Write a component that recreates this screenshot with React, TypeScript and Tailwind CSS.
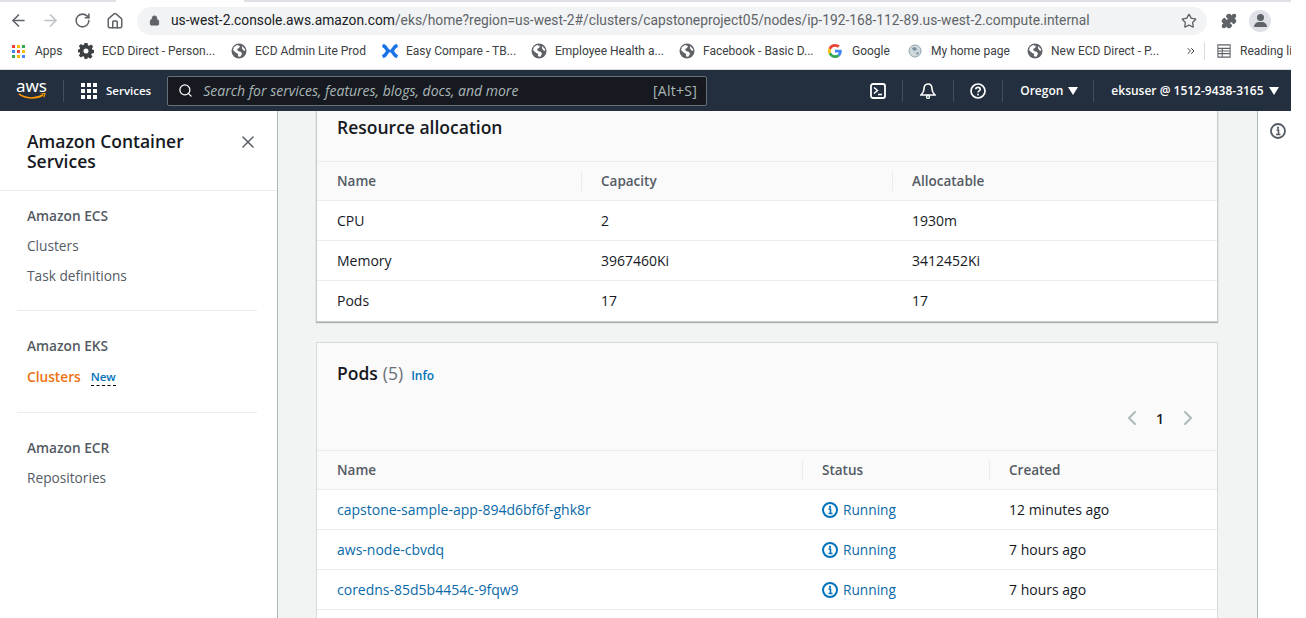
import React from 'react';
import { ArrowLeft, ArrowRight, RotateCw, Home, Lock, Star, Puzzle, ChevronLeft, ChevronRight, X, Search, ChevronsRight } from 'lucide-react';

const Globe = () => (
  <svg viewBox="0 0 16 16" className="w-4 h-4 shrink-0">
    <circle cx="8" cy="8" r="7.5" fill="#5f6368" />
    <path d="M3 4l3-2 3 1-1 2-2 1 1 2 3 1 1 2-2 3-2-1V11L4 9 2 7zM11 3l3 3v2l-2-1-1-2z" fill="#fff" />
  </svg>
);

const Gear = () => (
  <svg viewBox="0 0 16 16" className="w-4 h-4 shrink-0">
    <path d="M6.500 0h3l.4 2.200 1.300.6L13.100 1.500l2.100 2.100-1.300 1.900.6 1.300L16 7v3l-2.200.4-.6 1.300 1.300 1.900-2.100 2.100-1.900-1.300-1.300.6L9.500 16h-3l-.4-2.200-1.300-.6-1.900 1.300L.8 12.400l1.300-1.900-.6-1.300L0 9.500v-3l1.500-.3.600-1.300L.8 3 2.900.9l1.900 1.300 1.300-.6z" fill="#3c4043" />
    <circle cx="8" cy="8" r="2.500" fill="#fff" />
  </svg>
);

const AppsGrid = () => {
  const colors = ['#ea4335', '#fbbc05', '#34a853', '#4285f4', '#ea4335', '#fbbc05', '#34a853', '#fbbc05', '#4285f4'];
  return (
    <div className="grid grid-cols-3 gap-[2px] w-[13px] shrink-0">
      {colors.map((c, i) => (
        <svg key={i} viewBox="0 0 3 3" className="w-[3px] h-[3px]"><rect width="3" height="3" fill={c} /></svg>
      ))}
    </div>
  );
};

const Confluence = () => (
  <svg viewBox="0 0 16 16" className="w-4 h-4 shrink-0">
    <path d="M1 1c2 0 3 1 4 2.500C6.500 6 8 7 8 7s1.500-1 3-3.500C12 2 13 1 15 1l1 3c-2 1-3 2.500-4 4 1 1.500 2 3 4 4l-1 3c-2 0-3-1-4-2.500C9.500 10 8 9 8 9s-1.500 1-3 3.500C4 14 3 15 1 15l-1-3c2-1 3-2.500 4-4C3 6.500 2 5 0 4z" fill="#1a73e8" />
  </svg>
);

const GoogleG = () => (
  <svg viewBox="0 0 16 16" className="w-[14px] h-[14px] mr-[2px] shrink-0">
    <path d="M15.700 8.200c0-.6 0-1-.1-1.500H8v2.900h4.400c-.2 1-.8 1.800-1.600 2.300l2.500 2c1.500-1.400 2.400-3.400 2.400-5.700z" fill="#4285f4" />
    <path d="M8 16c2.200 0 4-.7 5.300-2l-2.500-2c-.7.500-1.600.8-2.800.8-2.100 0-3.900-1.400-4.600-3.400L.8 11.500C2.100 14.200 4.800 16 8 16z" fill="#34a853" />
    <path d="M3.400 9.400c-.3-.9-.3-1.900 0-2.800L.8 4.500c-1.100 2.200-1.100 4.800 0 7z" fill="#fbbc05" />
    <path d="M8 3.200c1.200 0 2.300.4 3.100 1.200l2.300-2.300C12 .8 10.100 0 8 0 4.800 0 2.100 1.800.8 4.500l2.600 2.100C4.100 4.600 5.900 3.200 8 3.200z" fill="#ea4335" />
  </svg>
);

const SmallGlobe = () => (
  <svg viewBox="0 0 16 16" className="w-4 h-4 shrink-0">
    <circle cx="8" cy="8" r="6" fill="#cfd8dc" stroke="#90a4ae" strokeWidth="1" />
    <path d="M5 5l3-1 2 2-2 2-2-1zM9 10l2-1 1 1-2 2z" fill="#78909c" />
  </svg>
);

const Caret = () => (
  <svg viewBox="0 0 10 8" className="w-[10px] h-[8px] ml-[5px] shrink-0">
    <path d="M0 0h10L5 8z" fill="#fff" />
  </svg>
);

const bookmarks = [
  { label: 'ECD Direct - Person...', icon: <Gear />, width: 'w-[153px]' },
  { label: 'ECD Admin Lite Prod', icon: <Globe />, width: 'w-[151px]' },
  { label: 'Easy Compare - TB...', icon: <Confluence />, width: 'w-[149px]' },
  { label: 'Employee Health a...', icon: <Globe />, width: 'w-[148px]' },
  { label: 'Facebook - Basic D...', icon: <Globe />, width: 'w-[149px]' },
  { label: 'Google', icon: <GoogleG />, width: 'w-[79px]' },
  { label: 'My home page', icon: <SmallGlobe />, width: 'w-[120px]' },
  { label: 'New ECD Direct - P...', icon: <Globe />, width: 'w-[158px]' },
];

const RunningIcon = () => (
  <svg viewBox="0 0 16 16" className="w-4 h-4 shrink-0">
    <circle cx="8" cy="8" r="7" fill="none" stroke="#0073bb" strokeWidth="2" />
    <path d="M6.500 7h2v4M6.500 11.500h4" fill="none" stroke="#0073bb" strokeWidth="1.600" />
    <rect x="7" y="3.800" width="2" height="2" fill="#0073bb" />
  </svg>
);

const ColumnHead = ({ children, divider }: { children: React.ReactNode; divider?: boolean }) => (
  <div className="flex items-center h-[38px] pl-5 font-semibold text-[13.5px] text-[#545b64]">
    {divider && <span className="w-px h-[20px] bg-[#eaeded] -ml-5 mr-[19px]" />}
    {children}
  </div>
);

const resources = [
  ['CPU', '2', '1930m'],
  ['Memory', '3967460Ki', '3412452Ki'],
  ['Pods', '17', '17'],
];

const pods = [
  ['capstone-sample-app-894d6bf6f-ghk8r', '12 minutes ago'],
  ['aws-node-cbvdq', '7 hours ago'],
  ['coredns-85d5b4454c-9fqw9', '7 hours ago'],
];

export default function App() {
  return (
    <div className="w-[1306px] h-[618px] overflow-hidden bg-white font-['Open_Sans',sans-serif]">
      <div className="w-[1291px] h-[618px] flex flex-col overflow-hidden">
        {/* Browser tab strip remnant */}
        <div className="flex h-[2px] shrink-0">
          <div className="w-[116px] bg-[#dee1e6]" />
          <div className="w-[128px] bg-white" />
          <div className="flex-1 bg-[#dee1e6]" />
        </div>

        {/* Browser toolbar */}
        <div className="flex items-center h-[33px] shrink-0 pt-[4px] font-['Roboto',sans-serif]">
          <ArrowLeft className="w-[19px] h-[19px] ml-[9px] text-[#5f6368]" strokeWidth={2} />
          <ArrowRight className="w-[19px] h-[19px] ml-[13px] text-[#bdc1c6]" strokeWidth={2} />
          <RotateCw className="w-[17px] h-[17px] ml-[14px] text-[#5f6368]" strokeWidth={2.200} />
          <Home className="w-[18px] h-[18px] ml-[15px] text-[#5f6368]" strokeWidth={2} />
          <div className="flex items-center w-[1070px] h-[28px] ml-[13px] rounded-full bg-[#f1f3f4] pl-[12px] pr-[10px]">
            <Lock className="w-[11px] h-[11px] text-[#5f6368] fill-[#5f6368]" />
            <span className="ml-[11px] text-[13.8px] text-[#5f6368] whitespace-nowrap">
              <span className="text-[#202124]">us-west-2.console.aws.amazon.com</span>/eks/home?region=us-west-2#/clusters/capstoneproject05/nodes/ip-192-168-112-89.us-west-2.compute.internal
            </span>
            <Star className="w-[16px] h-[16px] ml-auto text-[#5f6368]" />
          </div>
          <Puzzle className="w-[16px] h-[16px] ml-[14px] text-[#5f6368] fill-[#5f6368]" />
          <div className="ml-[12px] w-[22px] h-[22px] rounded-full bg-[#dee1e6] flex flex-col items-center justify-center">
            <span className="w-[7px] h-[7px] rounded-full bg-[#5f6368]" />
            <span className="w-[13px] h-[5px] mt-px rounded-t-full bg-[#5f6368]" />
          </div>
        </div>

        {/* Bookmarks bar */}
        <div className="flex items-center h-[35px] shrink-0 pb-[2px] border-b border-[#dadce0] text-[12px] text-[#3c4043] font-['Roboto',sans-serif] whitespace-nowrap overflow-hidden">
          <div className="flex items-center w-[78px] shrink-0 pl-[12px] gap-[10px]">
            <AppsGrid />
            <span>Apps</span>
          </div>
          {bookmarks.map(b => (
            <div key={b.label} className={`flex items-center gap-2 shrink-0 ${b.width}`}>
              {b.icon}
              <span>{b.label}</span>
            </div>
          ))}
          <ChevronsRight className="w-[12px] h-[12px] shrink-0 text-[#3c4043]" />
          <span className="w-px h-[18px] shrink-0 bg-[#dadce0] ml-[7px]" />
          <svg viewBox="0 0 16 16" className="w-[14px] h-[14px] ml-[12px] shrink-0">
            <path d="M1 1h14v14H1zM1 5h14M1 8h14M1 11h14M6 5v10" fill="none" stroke="#5f6368" strokeWidth="1.200" />
          </svg>
          <span className="ml-[9px]">Reading list</span>
        </div>

        {/* AWS console nav */}
        <div className="flex items-center h-[41px] shrink-0 bg-[#232f3e] text-white text-[12px] font-semibold whitespace-nowrap">
          <div className="flex flex-col items-center w-[33px] ml-[15px] leading-none">
            <span className="text-[17px] font-normal leading-[14px] -mt-[2px] font-['Noto_Sans',sans-serif]">aws</span>
            <svg viewBox="0 0 32 8" className="w-[32px] h-[7px]">
              <path d="M1 1c8 6 20 6 28 1" fill="none" stroke="#ff9900" strokeWidth="1.800" />
              <path d="M26 0l5 .5-1.500 4.500" fill="none" stroke="#ff9900" strokeWidth="1.300" />
            </svg>
          </div>
          <span className="w-px h-[22px] bg-[#414d5c] ml-[15px]" />
          <div className="grid grid-cols-3 gap-[2px] w-[16px] ml-[17px]">
            {[...Array(9)].map((_, i) => (
              <span key={i} className="w-[4px] h-[4px] bg-white" />
            ))}
          </div>
          <span className="ml-[9px] text-[11.5px]">Services</span>
          <div className="flex items-center w-[540px] h-[30px] ml-[16px] pl-[10px] pr-[9px] rounded-[2px] bg-[#16191f] border border-[#687078] font-normal text-[14px] text-[#aab7b8]">
            <Search className="w-[15px] h-[15px] text-white" strokeWidth={2} />
            <span className="ml-[10px] italic">Search for services, features, blogs, docs, and more</span>
            <span className="ml-auto tracking-[0.3px]">[Alt+S]</span>
          </div>
          <svg viewBox="0 0 16 16" className="w-4 h-4 ml-[163px] shrink-0">
            <rect x="1" y="1" width="14" height="14" rx="2" fill="none" stroke="#fff" strokeWidth="1.800" />
            <path d="M4 4.500L7.500 7.500 4 10.500M8 11.500h4" fill="none" stroke="#fff" strokeWidth="1.500" />
          </svg>
          <span className="w-px h-[22px] bg-[#414d5c] ml-[16px]" />
          <svg viewBox="0 0 16 16" className="w-4 h-4 ml-[17px] shrink-0">
            <path d="M8 1c3 0 4 2.500 4 5 0 3 2 5 3 6H1c1-1 3-3 3-6 0-2.500 1-5 4-5z" fill="none" stroke="#fff" strokeWidth="1.600" />
            <circle cx="8" cy="14" r="1.500" fill="none" stroke="#fff" strokeWidth="1.300" />
          </svg>
          <span className="w-px h-[22px] bg-[#414d5c] ml-[17px]" />
          <svg viewBox="0 0 16 16" className="w-4 h-4 ml-[16px] shrink-0">
            <circle cx="8" cy="8" r="7" fill="none" stroke="#fff" strokeWidth="1.700" />
            <path d="M5.800 6.200C5.800 3.800 10.200 3.800 10.200 6.200 10.200 7.800 8 7.800 8 9.500" fill="none" stroke="#fff" strokeWidth="1.600" />
            <rect x="7.200" y="10.700" width="1.600" height="1.700" fill="#fff" />
          </svg>
          <span className="w-px h-[22px] bg-[#414d5c] ml-[16px]" />
          <span className="ml-[17px]">Oregon</span>
          <Caret />
          <span className="w-px h-[22px] bg-[#414d5c] ml-[15px]" />
          <span className="ml-[17px]">eksuser @ 1512-9438-3165</span>
          <Caret />
        </div>

        <div className="flex flex-1 min-h-0">
          {/* Sidebar */}
          <aside className="w-[278px] shrink-0 border-r border-[#aab7b8] text-[13.7px] text-[#545b64]">
            <div className="flex justify-between h-[80px] pl-[27px] pr-[19px] pt-[20px] border-b border-[#eaeded]">
              <h2 className="w-[190px] font-semibold text-[17.5px] leading-[20px] text-[#16191f]">Amazon Container Services</h2>
              <X className="w-[20px] h-[20px] mt-px text-[#545b64]" strokeWidth={1.800} />
            </div>
            <div className="ml-[17px] mr-[20px] pl-[10px] pt-[15px] h-[120px] border-b border-[#eaeded]">
              <h3 className="font-semibold leading-[20px]">Amazon ECS</h3>
              <p className="mt-[10px] leading-[20px]">Clusters</p>
              <p className="mt-[10px] leading-[20px]">Task definitions</p>
            </div>
            <div className="ml-[17px] mr-[20px] pl-[10px] pt-[25px] h-[102px] border-b border-[#eaeded]">
              <h3 className="font-semibold leading-[20px]">Amazon EKS</h3>
              <div className="flex items-center mt-[11px] leading-[20px]">
                <span className="font-semibold text-[#ec7211]">Clusters</span>
                <span className="ml-[10px] text-[11.5px] leading-[16px] font-semibold text-[#0073bb] border-b border-dashed border-black">New</span>
              </div>
            </div>
            <div className="ml-[17px] mr-[20px] pl-[10px] pt-[25px]">
              <h3 className="font-semibold leading-[20px]">Amazon ECR</h3>
              <p className="mt-[10px] leading-[20px]">Repositories</p>
            </div>
          </aside>

          {/* Main content */}
          <main className="flex-1 min-w-0 bg-[#f2f3f3] pl-[38px] pr-[39px] overflow-hidden text-[14px] text-[#16191f]">
            <section className="bg-white border-x border-b border-[#c6cccc] shadow-[0_1px_1px_0_rgba(0,28,36,0.3)]">
              <div className="h-[51px] pl-5 pt-[4px] bg-[#fafafa] border-b border-[#eaeded]">
                <h2 className="font-semibold text-[17.5px] leading-[24px]">Resource allocation</h2>
              </div>
              <div className="grid grid-cols-[264px_311px_1fr] bg-[#fafafa] border-b border-[#eaeded]">
                <ColumnHead>Name</ColumnHead>
                <ColumnHead divider>Capacity</ColumnHead>
                <ColumnHead divider>Allocatable</ColumnHead>
              </div>
              {resources.map((row, i) => (
                <div key={row[0]} className={`grid grid-cols-[264px_311px_1fr] h-[40px] items-center border-b ${i < 2 ? 'border-[#eaeded]' : 'border-transparent'}`}>
                  {row.map(cell => (
                    <div key={cell + row[0]} className="pl-5">{cell}</div>
                  ))}
                </div>
              ))}
            </section>

            <section className="mt-[20px] bg-white border-x border-t border-[#d5dbdb]">
              <div className="h-[108px] bg-[#fafafa] border-b border-[#eaeded] pl-5 pr-[17px] pt-[18px]">
                <div className="flex items-baseline">
                  <h2 className="font-semibold text-[17.5px] leading-[24px]">Pods</h2>
                  <span className="ml-[5px] text-[17.5px] leading-[24px] text-[#687078]">(5)</span>
                  <span className="ml-[8px] text-[12px] font-semibold text-[#0073bb]">Info</span>
                </div>
                <div className="flex items-center justify-end mt-[21px]">
                  <ChevronLeft className="w-[24px] h-[24px] text-[#aab7b8]" strokeWidth={1.800} />
                  <span className="mx-[12px] font-semibold text-[14px] text-[#16191f]">1</span>
                  <ChevronRight className="w-[24px] h-[24px] text-[#aab7b8]" strokeWidth={1.800} />
                </div>
              </div>
              <div className="grid grid-cols-[485px_187px_1fr] bg-[#fafafa] border-b border-[#eaeded]">
                <ColumnHead>Name</ColumnHead>
                <ColumnHead divider>Status</ColumnHead>
                <ColumnHead divider>Created</ColumnHead>
              </div>
              {pods.map(pod => (
                <div key={pod[0]} className="grid grid-cols-[485px_187px_1fr] h-[40px] items-center border-b border-[#eaeded]">
                  <div className="pl-5 text-[#0a6aa8]">{pod[0]}</div>
                  <div className="pl-5 mt-px flex items-center gap-[5px] text-[13.7px] text-[#0a6aa8]">
                    <RunningIcon />
                    Running
                  </div>
                  <div className="pl-5">{pod[1]}</div>
                </div>
              ))}
              <div className="h-[40px]" />
            </section>
          </main>

          {/* Right help rail */}
          <div className="w-[34px] shrink-0 border-l border-[#aab7b8] flex justify-end pr-[5px] pt-[12px]">
            <svg viewBox="0 0 16 16" className="w-4 h-4">
              <circle cx="8" cy="8" r="7" fill="none" stroke="#545b64" strokeWidth="1.800" />
              <path d="M6.500 7h2v4M6 11.500h4.500" fill="none" stroke="#545b64" strokeWidth="1.600" />
              <rect x="7" y="3.800" width="2" height="2" fill="#545b64" />
            </svg>
          </div>
        </div>
      </div>
    </div>
  );
}
